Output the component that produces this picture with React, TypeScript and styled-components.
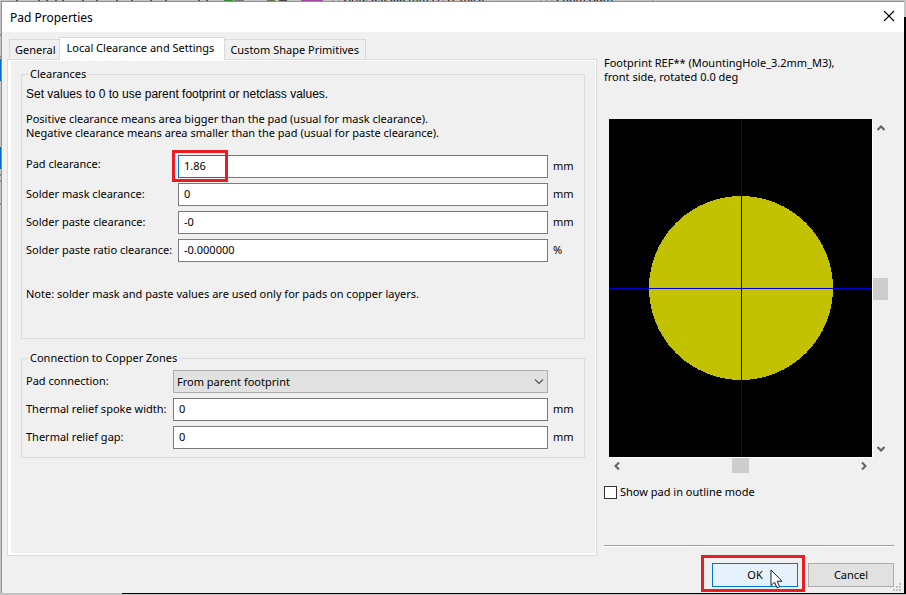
import React, { useState } from "react";
import styled, { createGlobalStyle, css } from "styled-components";

const Global = createGlobalStyle`
  *, *::before, *::after { box-sizing: border-box; }
  body { margin: 0; background: #c9c9c9; overflow: hidden; }
  body, input, button, select {
    font-family: "Noto Sans", "Open Sans", sans-serif;
    font-size: 11px;
    line-height: 14px;
    color: #000;
  }
`;

const Desktop = styled.div`
  position: relative;
  height: 100vh;
  padding: 1px 2px 2px 1px;
  background: #c4c4c4;
`;

const TopStrip = styled.svg`
  position: absolute;
  left: 0;
  top: 0;
  width: 100%;
  height: 4px;
`;

const LeftStrip = styled.svg`
  position: absolute;
  left: 0;
  top: 0;
  width: 2px;
  height: 100%;
`;

const RightStrip = styled.div`
  position: absolute;
  right: 0;
  top: 17px;
  bottom: 1px;
  width: 2px;
  background: #000;
`;

const BottomStrip = styled.div`
  position: absolute;
  left: 122px;
  right: 0;
  bottom: 1px;
  height: 2px;
  background: #000;
`;

const Dialog = styled.main`
  position: relative;
  height: 100%;
  display: flex;
  flex-direction: column;
  background: #f0f0f0;
  border: 1px solid #919191;
  border-width: 1px 0 0 1px;
`;

const TitleBar = styled.header`
  flex: none;
  height: 30px;
  padding: 0 9px 0 8px;
  display: flex;
  align-items: center;
  justify-content: space-between;
  background: #fff;
`;

const Title = styled.h1`
  margin: 0;
  padding-top: 1px;
  font-size: 12px;
  line-height: 16px;
  font-weight: 400;
`;

const CloseButton = styled.button`
  display: flex;
  padding: 0 0 2px;
  border: 0;
  background: none;
`;

const Body = styled.div`
  flex: 1;
  min-height: 0;
  display: flex;
  gap: 7px;
  padding: 5px 10px 0 5px;
`;

const Notebook = styled.section`
  flex: 1;
  min-width: 0;
  display: flex;
  flex-direction: column;
`;

const TabList = styled.div`
  flex: none;
  height: 22px;
  padding-left: 2px;
  display: flex;
  align-items: flex-end;
`;

const Tab = styled.button<{ $active?: boolean }>`
  height: 20px;
  padding: 0 6px 0 5px;
  border: 1px solid #d9d9d9;
  border-bottom: 0;
  background: #f0f0f0;
  white-space: nowrap;

  &:first-child { padding-right: 3px; }
  & + & { border-left: 0; }

  ${(p) =>
    p.$active &&
    css`
      && {
        position: relative;
        height: 23px;
        margin: 0 0 -1px -1px;
        padding: 0 10px 2px 7px;
        border-left: 1px solid #d9d9d9;
        background: #fff;
      }
    `}
`;

const Page = styled.div`
  flex: 1;
  border: 1px solid #dcdcdc;
  padding: 1px 1px 2px 3px;
  background: #fff;
`;

const PageInner = styled.div`
  height: 100%;
  padding: 6px 10px 0;
  background: #f0f0f0;
`;

const Group = styled.fieldset<{ $tall?: boolean }>`
  margin: 0 0 12px;
  min-width: 0;
  min-height: ${(p) => (p.$tall ? 272 : 107)}px;
  padding: ${(p) => (p.$tall ? 6 : 5)}px 36px 0 4px;
  border: 1px solid #dcdcdc;
`;

const Legend = styled.legend`
  margin-left: 2px;
  padding: 0 2px;
`;

const Intro = styled.p`
  margin: 0 0 11px;
  font-family: "Liberation Sans", Arial, sans-serif;
  font-size: 12px;
  line-height: 14px;
`;

const Note = styled.p<{ $gap?: number }>`
  margin: ${(p) => p.$gap ?? 0}px 0 0;
`;

const Rows = styled.div<{ $labelWidth: number; $top?: number }>`
  display: grid;
  grid-template-columns: ${(p) => p.$labelWidth}px 1fr;
  row-gap: 5px;
  margin-top: ${(p) => p.$top ?? 0}px;
`;

const Label = styled.label<{ $raised?: boolean }>`
  align-self: ${(p) => (p.$raised ? "start" : "center")};
  padding: ${(p) => (p.$raised ? "2px 0 0" : "0 0 2px")};
  white-space: nowrap;
`;

const FieldCell = styled.div`
  position: relative;
  display: flex;
  height: 23px;
`;

const Unit = styled.span`
  position: absolute;
  left: 100%;
  top: 4px;
  padding-left: 5px;
  white-space: nowrap;
`;

const TextField = styled.input<{ $focused?: boolean }>`
  flex: 1;
  min-width: 0;
  padding: 0 5px 2px;
  border: 1px solid #7a7a7a;
  border-left-color: ${(p) => (p.$focused ? "#0078d7" : "#7a7a7a")};
  border-radius: 0;
  background: #fff;
  outline: 0;
`;

const SelectField = styled.select`
  flex: 1;
  appearance: none;
  padding: 0 3px;
  border: 1px solid #adadad;
  border-radius: 0;
  background: #e1e1e1;
`;

const SelectArrow = styled.svg`
  position: absolute;
  right: 4px;
  top: 9px;
  pointer-events: none;
`;

const FieldMark = styled.span`
  position: absolute;
  left: -6px;
  top: -5px;
  width: 56px;
  height: 32px;
  border: 3px solid #ed1c24;
  pointer-events: none;

  &::after {
    content: "";
    position: absolute;
    inset: 2px 0 1px 3px;
    border: 1px solid #0078d7;
    border-right: 0;
  }
`;

const Side = styled.aside`
  flex: none;
  width: 290px;
  display: flex;
  flex-direction: column;
  padding: 19px 0 9px;
`;

const Preview = styled.div`
  flex: 1;
  min-height: 0;
  margin: 35px 6px 0 5px;
  display: grid;
  grid-template: minmax(0, 1fr) 15px / 1fr 15px;
`;

const Canvas = styled.div`
  min-height: 0;
  background: #000;
  border: 1px solid #fff;
  border-width: 0 1px 1px 0;
`;

const Drawing = styled.svg`
  display: block;
  width: 100%;
  height: 100%;
`;

const ScrollBar = styled.div<{ $horizontal?: boolean }>`
  display: flex;
  flex-direction: ${(p) => (p.$horizontal ? "row" : "column")};
  align-items: center;
  justify-content: space-between;
  padding: ${(p) => (p.$horizontal ? "0 5px 0 4px" : "5px 0")};
`;

const Thumb = styled.span<{ $horizontal?: boolean }>`
  width: ${(p) => (p.$horizontal ? 17 : 15)}px;
  height: ${(p) => (p.$horizontal ? 15 : 22)}px;
  background: #cdcdcd;
`;

const ArrowButton = styled.button`
  display: flex;
  padding: 0;
  border: 0;
  background: none;
`;

const CheckLabel = styled.label`
  display: flex;
  align-items: center;
  gap: 3px;
  margin-top: 12px;
`;

const CheckBox = styled.input`
  appearance: none;
  width: 13px;
  height: 13px;
  margin: 0;
  border: 1px solid #333;
  background: #fff;
`;

const Rule = styled.hr`
  width: 100%;
  margin: 46px 0 0;
  border: 0;
  border-top: 1px solid #a0a0a0;
  border-bottom: 1px solid #fff;
`;

const Footer = styled.footer`
  flex: none;
  display: flex;
  justify-content: flex-end;
  gap: 10px;
  padding: 7px 10px 6px;
`;

const Action = styled.button<{ $primary?: boolean }>`
  position: relative;
  width: 86px;
  height: 24px;
  padding: 0;
  border: 1px solid ${(p) => (p.$primary ? "#0078d7" : "#adadad")};
  background: ${(p) => (p.$primary ? "#e5f1fb" : "#e1e1e1")};
`;

const ButtonMark = styled.span`
  position: absolute;
  inset: -9px -8px -6px -12px;
  border: 3px solid #ed1c24;
`;

const Pointer = styled.svg`
  position: absolute;
  left: 57px;
  top: 5px;
`;

const Grip = styled.svg`
  position: absolute;
  right: 3px;
  bottom: 2px;
`;

const chevrons = {
  up: "M0.5 6 L4 2.5 L7.5 6",
  down: "M0.5 2 L4 5.5 L7.5 2",
  left: "M6 0.5 L2.5 4 L6 7.5",
  right: "M2 0.5 L5.5 4 L2 7.5",
};

function Arrow({ dir }: { dir: keyof typeof chevrons }) {
  return (
    <ArrowButton aria-label={`Scroll ${dir}`}>
      <svg width="8" height="8" viewBox="0 0 8 8">
        <path d={chevrons[dir]} fill="none" stroke="#606060" strokeWidth="2" />
      </svg>
    </ArrowButton>
  );
}

type FieldProps = { id: string; label: string; value: string; unit: string; marked?: boolean };

function Field({ id, label, value, unit, marked }: FieldProps) {
  const [text, setText] = useState(value);
  return (
    <>
      <Label htmlFor={id} $raised={marked}>{label}</Label>
      <FieldCell>
        <TextField id={id} $focused={marked} value={text} onChange={(e) => setText(e.target.value)} />
        {marked && <FieldMark />}
        <Unit>{unit}</Unit>
      </FieldCell>
    </>
  );
}

const toolbarMarks = [16, 38, 46, 55, 62, 82, 96, 116, 131, 150, 165, 198, 206];
const gripDots = [[6, 0], [3, 3], [6, 3], [0, 6], [3, 6], [6, 6]];

export default function App() {
  const [outline, setOutline] = useState(false);
  return (
    <Desktop>
      <Global />
      <TopStrip aria-hidden="true">
        {toolbarMarks.map((x) => <rect key={x} x={x} width="2" height="1" fill="#555" />)}
        <rect x="224" width="9" height="1" fill="#2e8b2e" />
        <rect x="234" width="10" height="1" fill="#777" />
        <rect x="267" width="8" height="1" fill="#5d7a4c" />
        <rect x="279" width="8" height="1" fill="#444" />
        <rect x="301" width="22" height="1" fill="#a349a4" />
        <path d="M333 0v1M339 0v1M541 0v1M547 0v1M552 0v1M653 0v1" stroke="#888" />
        <text x="343" y="2">Grid: 0.0500 mm (1.97 mils)</text>
        <text x="556" y="2">Zoom Auto</text>
      </TopStrip>
      <LeftStrip aria-hidden="true">
        <rect y="59" width="2" height="22" fill="#0067c0" />
        <rect y="147" width="2" height="22" fill="#0067c0" />
        <path d="M0 35h2M0 57h2M0 175h2M0 181h2M0 204h2" stroke="#555" />
      </LeftStrip>
      <RightStrip />
      <BottomStrip />
      <Dialog>
        <TitleBar>
          <Title>Pad Properties</Title>
          <CloseButton aria-label="Close">
            <svg width="12" height="12" viewBox="0 0 12 12">
              <path d="M1 1 L11 11 M11 1 L1 11" stroke="#000" strokeWidth="1.1" />
            </svg>
          </CloseButton>
        </TitleBar>
        <Body>
          <Notebook>
            <TabList role="tablist">
              <Tab role="tab">General</Tab>
              <Tab role="tab" aria-selected $active>Local Clearance and Settings</Tab>
              <Tab role="tab">Custom Shape Primitives</Tab>
            </TabList>
            <Page role="tabpanel">
              <PageInner>
                <Group $tall>
                  <Legend>Clearances</Legend>
                  <Intro>Set values to 0 to use parent footprint or netclass values.</Intro>
                  <Note>Positive clearance means area bigger than the pad (usual for mask clearance).</Note>
                  <Note>Negative clearance means area smaller than the pad (usual for paste clearance).</Note>
                  <Rows $labelWidth={152} $top={15}>
                    <Field id="pad" label="Pad clearance:" value="1.86" unit="mm" marked />
                    <Field id="mask" label="Solder mask clearance:" value="0" unit="mm" />
                    <Field id="paste" label="Solder paste clearance:" value="-0" unit="mm" />
                    <Field id="ratio" label="Solder paste ratio clearance:" value="-0.000000" unit="%" />
                  </Rows>
                  <Note $gap={25}>Note: solder mask and paste values are used only for pads on copper layers.</Note>
                </Group>
                <Group>
                  <Legend>Connection to Copper Zones</Legend>
                  <Rows $labelWidth={147}>
                    <Label htmlFor="connection">Pad connection:</Label>
                    <FieldCell>
                      <SelectField id="connection">
                        <option>From parent footprint</option>
                      </SelectField>
                      <SelectArrow width="10" height="6" viewBox="0 0 10 6">
                        <path d="M1 0.5 L5 4.5 L9 0.5" fill="none" stroke="#555" strokeWidth="1.2" />
                      </SelectArrow>
                    </FieldCell>
                    <Field id="spoke" label="Thermal relief spoke width:" value="0" unit="mm" />
                    <Field id="gap" label="Thermal relief gap:" value="0" unit="mm" />
                  </Rows>
                </Group>
              </PageInner>
            </Page>
          </Notebook>
          <Side>
            <Note>Footprint REF** (MountingHole_3.2mm_M3),<br />front side, rotated 0.0 deg</Note>
            <Preview>
              <Canvas>
                <Drawing viewBox="0 0 263 338" preserveAspectRatio="xMidYMid slice" shapeRendering="crispEdges">
                  <circle cx="132" cy="169" r="92" fill="#c2c200" />
                  <rect x="132" width="1" height="338" fill="#0000a8" />
                  <rect x="132" y="77" width="1" height="184" fill="#000040" />
                  <rect y="169" width="263" height="1" fill="#0000d0" />
                </Drawing>
              </Canvas>
              <ScrollBar><Arrow dir="up" /><Thumb /><Arrow dir="down" /></ScrollBar>
              <ScrollBar $horizontal><Arrow dir="left" /><Thumb $horizontal /><Arrow dir="right" /></ScrollBar>
            </Preview>
            <CheckLabel>
              <CheckBox type="checkbox" checked={outline} onChange={(e) => setOutline(e.target.checked)} />
              Show pad in outline mode
            </CheckLabel>
            <Rule />
          </Side>
        </Body>
        <Footer>
          <Action $primary>
            OK
            <ButtonMark />
            <Pointer width="13" height="20" viewBox="0 0 13 20" aria-hidden="true">
              <path
                d="M1 1 V16.5 L4.6 13.2 L7 18.8 L9.6 17.7 L7.2 12.2 H12 Z"
                fill="#fff"
                stroke="#1a1a2a"
                strokeWidth="1"
              />
            </Pointer>
          </Action>
          <Action>Cancel</Action>
        </Footer>
        <Grip width="8" height="8" viewBox="0 0 8 8" aria-hidden="true">
          {gripDots.map(([x, y]) => <rect key={`${x}-${y}`} x={x} y={y} width="2" height="2" fill="#bfbfbf" />)}
        </Grip>
      </Dialog>
    </Desktop>
  );
}
